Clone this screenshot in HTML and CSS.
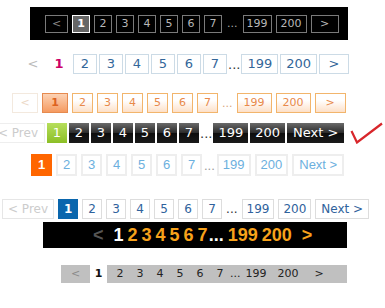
FILE: index.html
```html
<!DOCTYPE html>
<html lang="en">

<head>
  <meta charset="UTF-8">
  <meta name="viewport" content="width=device-width, initial-scale=1.0">
  <title>Pagination styles</title>
  <link rel="stylesheet" href="styles.css">
</head>

<body>

  <div class="pager dark">
    <a href="#" class="prev">&lt;</a>
    <a href="#" class="cur">1</a>
    <a href="#">2</a>
    <a href="#">3</a>
    <a href="#">4</a>
    <a href="#">5</a>
    <a href="#">6</a>
    <a href="#">7</a>
    <span class="dots">...</span>
    <a href="#">199</a>
    <a href="#" class="last">200</a>
    <a href="#" class="next">&gt;</a>
  </div>

  <div class="pager plain">
    <a href="#" class="prev">&lt;</a>
    <a href="#" class="cur">1</a>
    <a href="#">2</a>
    <a href="#">3</a>
    <a href="#">4</a>
    <a href="#">5</a>
    <a href="#">6</a>
    <a href="#">7</a>
    <span class="dots">...</span>
    <a href="#">199</a>
    <a href="#">200</a>
    <a href="#" class="next">&gt;</a>
  </div>

  <div class="pager orange">
    <a href="#" class="prev">&lt;</a>
    <a href="#" class="cur">1</a>
    <a href="#">2</a>
    <a href="#">3</a>
    <a href="#">4</a>
    <a href="#">5</a>
    <a href="#">6</a>
    <a href="#">7</a>
    <span class="dots">...</span>
    <a href="#">199</a>
    <a href="#">200</a>
    <a href="#" class="next">&gt;</a>
  </div>

  <div class="pager black">
    <a href="#" class="prev">&lt; Prev</a>
    <a href="#" class="cur">1</a>
    <a href="#">2</a>
    <a href="#">3</a>
    <a href="#">4</a>
    <a href="#">5</a>
    <a href="#">6</a>
    <a href="#">7</a>
    <span class="dots">...</span>
    <a href="#">199</a>
    <a href="#">200</a>
    <a href="#" class="next">Next &gt;</a>
    <svg class="tick" width="33" height="22" viewBox="0 0 33 22">
      <polyline points="1.5,9 7,20.5 32,1.5" fill="none" stroke="#d8262b" stroke-width="2.2" stroke-linejoin="miter" />
    </svg>
  </div>

  <div class="pager light">
    <a href="#" class="cur">1</a>
    <a href="#">2</a>
    <a href="#">3</a>
    <a href="#">4</a>
    <a href="#">5</a>
    <a href="#">6</a>
    <a href="#">7</a>
    <span class="dots">...</span>
    <a href="#">199</a>
    <a href="#">200</a>
    <a href="#" class="next">Next &gt;</a>
  </div>

  <div class="pager blue">
    <a href="#" class="prev">&lt; Prev</a>
    <a href="#" class="cur">1</a>
    <a href="#">2</a>
    <a href="#">3</a>
    <a href="#">4</a>
    <a href="#">5</a>
    <a href="#">6</a>
    <a href="#">7</a>
    <span class="dots">...</span>
    <a href="#">199</a>
    <a href="#">200</a>
    <a href="#" class="next">Next &gt;</a>
  </div>

  <div class="pager bold">
    <a href="#" class="prev">&lt;</a>
    <a href="#" class="cur">1</a>
    <a href="#">2</a>
    <a href="#">3</a>
    <a href="#">4</a>
    <a href="#">5</a>
    <a href="#">6</a>
    <a href="#">7</a>
    <span class="dots">...</span>
    <a href="#">199</a>
    <a href="#">200</a>
    <a href="#" class="next">&gt;</a>
  </div>

  <div class="pager gray">
    <a href="#" class="prev">&lt;</a>
    <a href="#" class="cur">1</a>
    <a href="#">2</a>
    <a href="#">3</a>
    <a href="#">4</a>
    <a href="#">5</a>
    <a href="#">6</a>
    <a href="#">7</a>
    <span class="dots">...</span>
    <a href="#" class="big">199</a>
    <a href="#" class="big">200</a>
    <a href="#" class="next">&gt;</a>
  </div>

</body>

</html>
```

FILE: styles.css
```css
* {
  margin: 0;
  padding: 0;
  box-sizing: border-box;
}

body {
  width: 385px;
  height: 308px;
  overflow: hidden;
  background: #fff;
  font-family: "DejaVu Sans", Verdana, sans-serif;
}

a {
  text-decoration: none;
}

.pager {
  display: flex;
  align-items: center;
}

.pager a,
.pager span {
  display: block;
  text-align: center;
  white-space: nowrap;
}

/* 1. black box */
.dark {
  margin: 7px 0 0 30px;
  width: 318px;
  height: 33px;
  padding-left: 15px;
  gap: 4px;
  background: #000;
  font-size: 11px;
}

.dark a {
  height: 18px;
  line-height: 16px;
  min-width: 18px;
  padding: 0 3px;
  border: 1px solid #7a7a7a;
  color: #b8b8b8;
}

.dark .cur {
  background: #666;
  border-color: #fff;
  color: #fff;
  font-weight: bold;
}

.dark .prev {
  width: 23px;
  color: #888;
}

.dark .last {
  padding: 0 4px;
}

.dark .next {
  width: 28px;
}

.dark .dots {
  color: #aaa;
  margin: 0 1px;
}

/* 2. plain blue text */
.plain {
  margin: 14px 0 0 21px;
  height: 20px;
  gap: 2px;
  font-size: 13px;
}

.plain a {
  height: 20px;
  line-height: 18px;
  min-width: 24px;
  padding: 0 5px;
  border: 1px solid #ccdbe6;
  color: #336699;
}

.plain .prev {
  border-color: transparent;
  color: #bbb;
}

.plain .cur {
  border-color: transparent;
  color: #cc0066;
  font-weight: bold;
}

.plain .next {
  min-width: 30px;
}

.plain .dots {
  color: #333;
  margin: 0 -1px;
}

/* 3. orange */
.orange {
  margin: 19px 0 0 12px;
  height: 20px;
  gap: 4px;
  font-size: 11px;
}

.orange a {
  height: 20px;
  line-height: 18px;
  min-width: 21px;
  padding: 0 6px;
  border: 1px solid #f2b56c;
  color: #e8894a;
  background: linear-gradient(#fff 35%, #fde0c8);
}

.orange .prev {
  width: 26px;
  border-color: #f3e9de;
  color: #ecd8c6;
  background: #fff;
}

.orange .cur {
  width: 26px;
  border-color: #e68a4f;
  color: #dd621f;
  font-weight: bold;
  background: linear-gradient(#fcd2b4, #f59a60);
}

.orange .next {
  width: 31px;
}

.orange .dots {
  color: #d9a57a;
}

/* 4. black gloss */
.black {
  margin: 10px 0 0 -11px;
  height: 20px;
  gap: 2px;
  font-size: 13px;
}

.black a {
  height: 20px;
  line-height: 20px;
  min-width: 20px;
  padding: 0 5px;
  color: #fff;
  background: linear-gradient(#6a6a6a, #2a2a2a 50%, #0d0d0d 51%, #1a1a1a);
}

.black .prev {
  width: 56px;
  padding: 0 6px 0 0;
  border: 1px solid #eee;
  line-height: 18px;
  text-align: right;
  font-size: 12px;
  color: #ccc;
  background: #fff;
}

.black .cur {
  background: linear-gradient(#b6de5c, #8cbf26);
}

.black .next {
  padding: 0 6px;
}

.black .dots {
  color: #333;
  margin: 0 -1px;
}

.tick {
  margin-left: 4px;
  flex: none;
}

/* 5. light blue / orange */
.light {
  margin: 11px 0 0 31px;
  height: 22px;
  gap: 4px;
  font: 13px "Liberation Sans", Arial, sans-serif;
}

.light a {
  height: 22px;
  line-height: 18px;
  min-width: 21px;
  padding: 0 4px;
  border: 2px solid #eee;
  color: #6cb0de;
}

.light .cur {
  border-color: #ff6600;
  background: #ff6600;
  color: #fff;
  font-weight: bold;
}

.light .next {
  padding: 0 5px;
}

.light .dots {
  color: #999;
  margin: 0 -2px;
}

/* 6. blue */
.blue {
  margin: 23px 0 0 2px;
  height: 20px;
  gap: 4px;
  font-size: 12px;
}

.blue a {
  height: 20px;
  line-height: 18px;
  min-width: 20px;
  padding: 0 4px;
  border: 1px solid #dddddd;
  color: #2f629c;
}

.blue .prev {
  padding: 0 5px;
  border-color: #e6e6e6;
  color: #ccc;
}

.blue .next {
  padding: 0 5px;
}

.blue .cur {
  background: #0a66ad;
  border-color: #0a66ad;
  color: #fff;
  font-weight: bold;
}

.blue .dots {
  color: #333;
}

/* 7. bold numbers on black */
.bold {
  margin: 3px 0 0 43px;
  width: 304px;
  height: 26px;
  padding-left: 50px;
  gap: 4px;
  background: #000;
  font: bold 18px "Liberation Sans", Arial, sans-serif;
}

.bold a {
  color: #f7a21b;
}

.bold .prev {
  color: #555;
  margin-right: 6px;
}

.bold .cur {
  color: #fff;
}

.bold .dots {
  color: #fff;
  margin-left: -3px;
}

.bold .next {
  margin-left: 6px;
}

/* 8. grey strip */
.gray {
  margin: 17px 0 0 61px;
  width: 286px;
  height: 18px;
  background: #c0c0c0;
  font-size: 11px;
}

.gray a,
.gray span {
  height: 18px;
  line-height: 18px;
  width: 20px;
  color: #222;
}

.gray .prev {
  width: 29px;
  color: #8a8a8a;
}

.gray .cur {
  width: 17px;
  margin-right: 3px;
  background: #fff;
  color: #111;
  font-weight: bold;
}

.gray .dots {
  width: 10px;
}

.gray .big {
  width: 32px;
}

.gray .next {
  width: 30px;
}
```
